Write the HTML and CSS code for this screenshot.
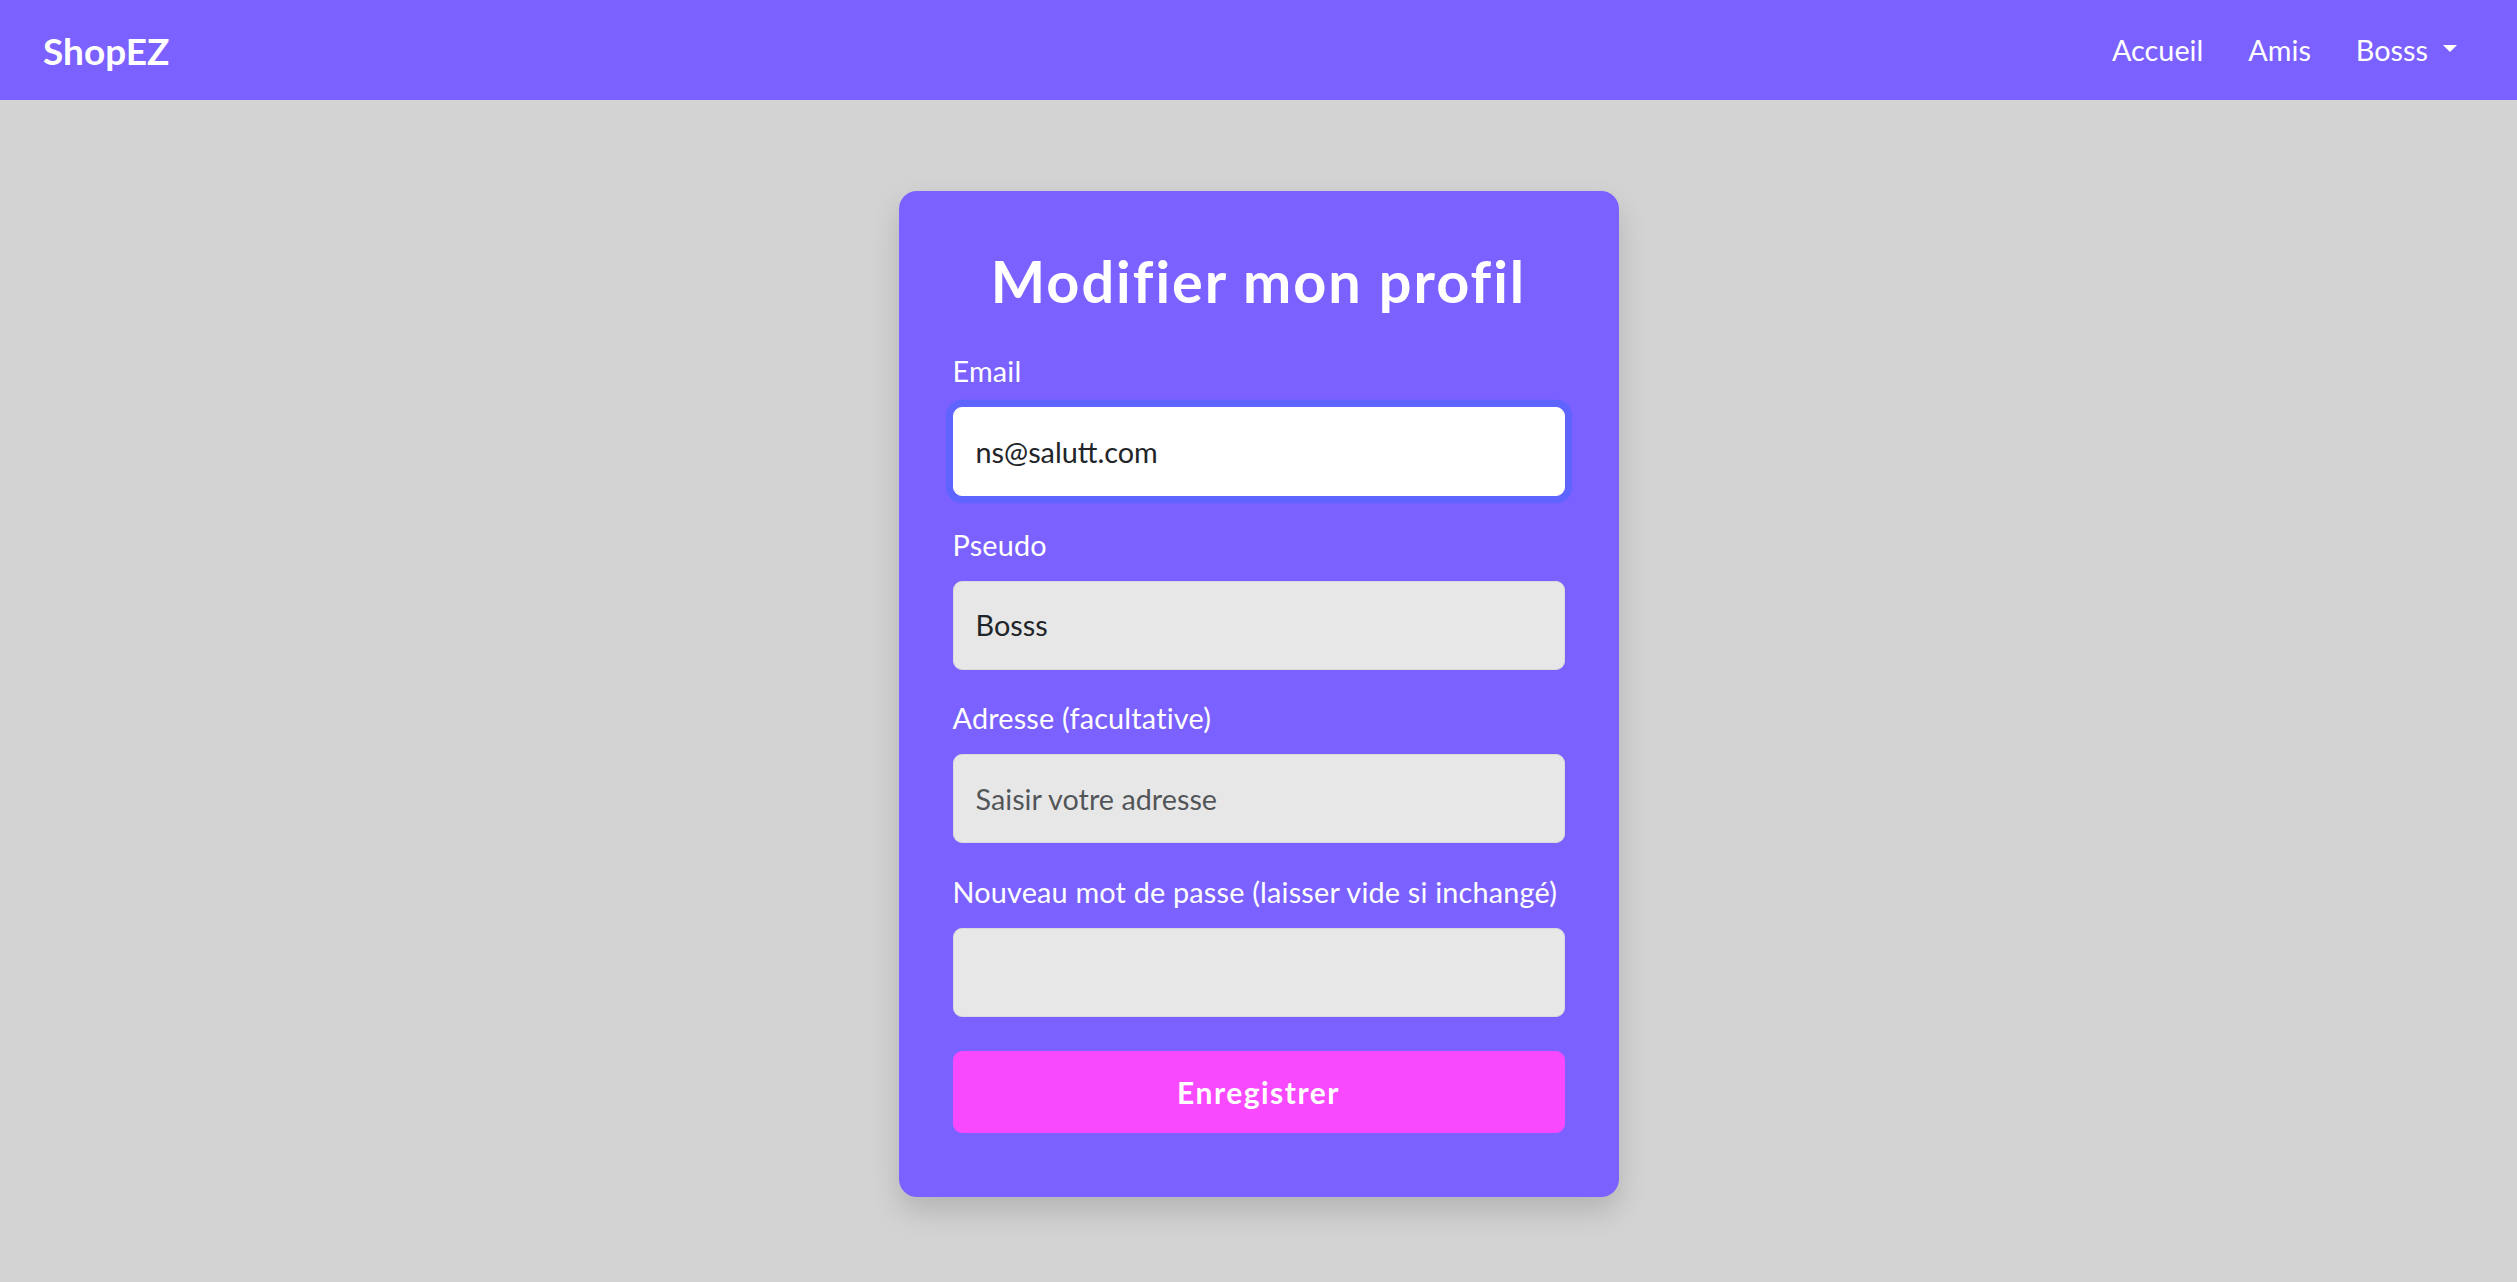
FILE: index.html
```html
<!DOCTYPE html>
<html lang="fr">
<head>
<meta charset="utf-8">
<title>ShopEZ - Modifier mon profil</title>
<link rel="stylesheet" href="styles.css">
</head>
<body>
<nav class="navbar">
  <a class="brand" href="#">ShopEZ</a>
  <ul class="nav-links">
    <li><a href="#">Accueil</a></li>
    <li><a href="#">Amis</a></li>
    <li><a href="#" class="dropdown">Bosss<span class="caret"></span></a></li>
  </ul>
</nav>
<main class="page">
  <section class="card">
    <h2 class="card-title">Modifier mon profil</h2>
    <form class="form">
      <div class="group">
        <label class="label" for="email">Email</label>
        <input class="input input-focus" id="email" type="email" value="ns@salutt.com">
      </div>
      <div class="group">
        <label class="label" for="pseudo">Pseudo</label>
        <input class="input" id="pseudo" type="text" value="Bosss">
      </div>
      <div class="group">
        <label class="label" for="adresse">Adresse (facultative)</label>
        <input class="input" id="adresse" type="text" placeholder="Saisir votre adresse">
      </div>
      <div class="group">
        <label class="label" for="mdp">Nouveau mot de passe (laisser vide si inchangé)</label>
        <input class="input" id="mdp" type="password">
      </div>
      <button class="btn" type="button">Enregistrer</button>
    </form>
  </section>
</main>
</body>
</html>
```

FILE: styles.css
```css
* { box-sizing: border-box; }

html, body {
  margin: 0;
  padding: 0;
}

body {
  background: #d3d3d3;
  font-family: "Lato", "Open Sans", sans-serif;
  color: #212529;
  min-height: 1282px;
}

.navbar {
  height: 100px;
  background: #7b61ff;
  display: flex;
  align-items: center;
  justify-content: space-between;
  padding: 0 60px 0 43px;
}

.brand {
  color: #fff;
  text-decoration: none;
  font-weight: 700;
  font-size: 37px;
  line-height: 1;
}

.nav-links {
  list-style: none;
  margin: 0;
  padding: 0;
  display: flex;
  gap: 45px;
  align-items: center;
}

.nav-links a {
  color: #fff;
  text-decoration: none;
  font-size: 28.8px;
  display: flex;
  align-items: center;
}

.caret {
  display: inline-block;
  margin-left: 15px;
  width: 0;
  height: 0;
  border-top: 7px solid #fff;
  border-left: 7.5px solid transparent;
  border-right: 7.5px solid transparent;
  position: relative;
  top: -2px;
}

.page {
  display: flex;
  justify-content: center;
  padding-top: 91px;
}

.card {
  width: 720px;
  background: #7b61ff;
  border-radius: 18px;
  padding: 55px 54px 64px;
  box-shadow: 0 14px 29px rgba(0, 0, 0, 0.15);
}

.card-title {
  margin: 0 0 35px;
  text-align: center;
  color: #fff;
  font-weight: 700;
  font-size: 57.6px;
  line-height: 69px;
  letter-spacing: 2px;
}

.form {
  display: flex;
  flex-direction: column;
}

.group {
  display: flex;
  flex-direction: column;
  margin-bottom: 27.5px;
}

.label {
  color: #fff;
  font-size: 28.8px;
  line-height: 43px;
  margin-bottom: 14px;
  white-space: nowrap;
  letter-spacing: 0.2px;
}

.input {
  height: 89px;
  width: 100%;
  background: #e7e7e7;
  border: 1.8px solid #dadada;
  border-radius: 9px;
  padding: 0 22px;
  font-family: inherit;
  font-size: 28.8px;
  color: #212529;
  outline: none;
}

.input::placeholder {
  color: rgba(33, 37, 41, 0.75);
}

.input-focus {
  background: #fff;
  border-color: #fff;
  box-shadow: 0 0 0 7.2px rgba(13, 110, 253, 0.25);
}

.btn {
  margin-top: 6.5px;
  height: 82px;
  width: 100%;
  background: #f849ff;
  border: none;
  border-radius: 9px;
  color: #fff;
  font-family: inherit;
  font-weight: 700;
  font-size: 30px;
  letter-spacing: 1.5px;
  cursor: pointer;
}
```
